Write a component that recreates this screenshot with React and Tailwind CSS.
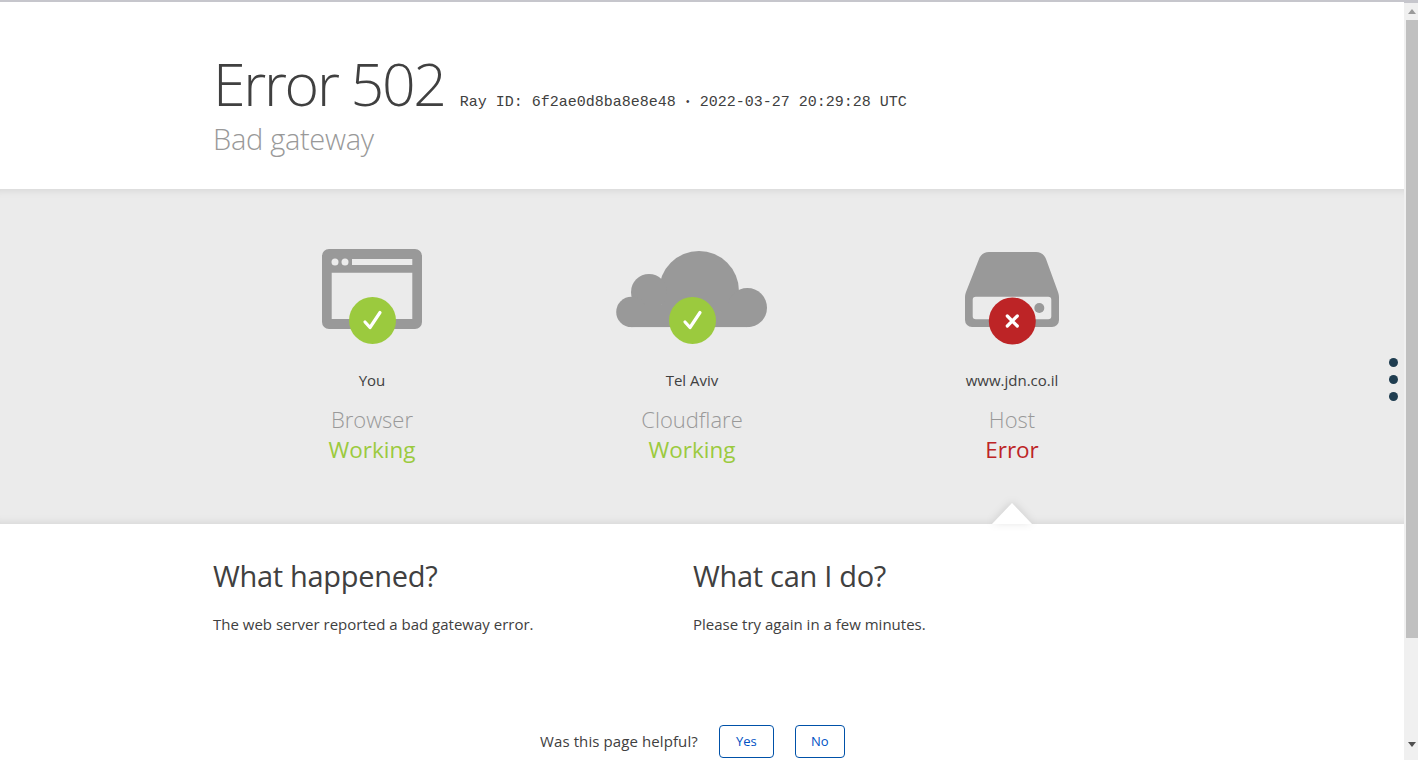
const SANS = "font-['Open_Sans',sans-serif]";

// ─── Status icons ─────────────────────────────────────────────────────────────
function Badge({ cx, cy, error }) {
  return (
    <g>
      <circle cx={cx} cy={cy} r="23.5" fill={error ? "#bd2426" : "#9bca3e"} />
      {error ? (
        <path
          d={`M${cx - 5} ${cy - 5}L${cx + 5} ${cy + 5}M${cx + 5} ${cy - 5}L${cx - 5} ${cy + 5}`}
          stroke="#fff"
          strokeWidth="3.2"
          strokeLinecap="round"
        />
      ) : (
        <path
          d={`M${cx - 7.5} ${cy + 1.5}L${cx - 2.5} ${cy + 7}L${cx + 7.5} ${cy - 8}`}
          stroke="#fff"
          strokeWidth="3.2"
          strokeLinecap="round"
          strokeLinejoin="round"
          fill="none"
        />
      )}
    </g>
  );
}

function BrowserIcon() {
  return (
    <svg width="160" height="100" viewBox="0 0 160 100">
      <path
        fillRule="evenodd"
        fill="#999"
        d="M37 4h86a7 7 0 0 1 7 7v66a7 7 0 0 1-7 7H37a7 7 0 0 1-7-7V11a7 7 0 0 1 7-7zM39.7 27.7V74h80.6V27.7z"
      />
      <rect x="60" y="14" width="60.3" height="6" fill="#ebebeb" />
      <circle cx="43" cy="17" r="3.5" fill="#ebebeb" />
      <circle cx="53" cy="17" r="3.5" fill="#ebebeb" />
      <Badge cx={80.5} cy={75.5} />
    </svg>
  );
}

function CloudIcon() {
  return (
    <svg width="160" height="100" viewBox="0 0 160 100">
      <g fill="#999">
        <circle cx="87" cy="46" r="40" />
        <circle cx="37" cy="47" r="18" />
        <circle cx="19.5" cy="67" r="15.3" />
        <circle cx="135.4" cy="62.7" r="19.6" />
        <rect x="19" y="60" width="116" height="22.3" />
      </g>
      <rect x="0" y="82.3" width="160" height="17.7" fill="#ebebeb" />
      <Badge cx={80.5} cy={75.5} />
    </svg>
  );
}

function ServerIcon() {
  return (
    <svg width="160" height="100" viewBox="0 0 160 100">
      <path
        fillRule="evenodd"
        fill="#999"
        d="M57 7H104c4.500 0 8.500 2.700 10 7L126 47c.7 2 1 3.500 1 5.500V75a7 7 0 0 1-7 7H40a7 7 0 0 1-7-7V52.500c0-2 .3-3.500 1-5.500L47 14c1.500-4.300 5.500-7 10-7zM43.700 51.700a3 3 0 0 0-3 3v16.600a3 3 0 0 0 3 3h72.600a3 3 0 0 0 3-3V54.700a3 3 0 0 0-3-3z"
      />
      <circle cx="107.300" cy="63" r="5" fill="#999" />
      <Badge cx={80.3} cy={76} error />
    </svg>
  );
}

// ─── Columns ──────────────────────────────────────────────────────────────────
const STATUS = [
  { Icon: BrowserIcon, place: "You", name: "Browser", state: "Working", color: "text-[#9bca3e]" },
  { Icon: CloudIcon, place: "Tel Aviv", name: "Cloudflare", state: "Working", color: "text-[#9bca3e]" },
  { Icon: ServerIcon, place: "www.jdn.co.il", name: "Host", state: "Error", color: "text-[#bd2426]" },
];

function StatusColumn({ Icon, place, name, state, color }) {
  return (
    <div className="w-[320px] flex flex-col items-center">
      <Icon />
      <p className="mt-[24px] text-[15px] leading-[22px] text-[#404040]">{place}</p>
      <p className="mt-[13px] text-[22px] leading-[30px] font-light text-[#999]">{name}</p>
      <p className={`mt-px text-[22.5px] leading-[30px] ${color}`}>{state}</p>
    </div>
  );
}

export default function App() {
  return (
    <div className={`h-[760px] overflow-hidden flex bg-white ${SANS}`}>
      <main className="relative flex-1 min-w-0">
        <div className="h-[2px] bg-[#c6c6cc]" />

        {/* Header */}
        <header className="h-[187px] pl-[213px] pt-[45px]">
          <div className="flex items-baseline">
            <h1 className="text-[59px] leading-[72px] font-light tracking-[-2.3px] text-[#404040]">Error 502</h1>
            <span className="ml-[15px] font-['Liberation_Mono',monospace] text-[15px] text-[#404040] whitespace-pre">
              Ray ID: 6f2ae0d8ba8e8e48 <span className="text-[10px] align-[1px]">•</span> 2022-03-27 20:29:28 UTC
            </span>
          </div>
          <h2 className="mt-[2px] text-[29px] leading-[36px] font-light tracking-[-0.3px] text-[#999]">Bad gateway</h2>
        </header>

        {/* Status */}
        <section className="relative h-[335px] bg-[#ebebeb] pl-[212px] pt-[56px] shadow-[inset_0_9px_8px_-8px_rgba(0,0,0,0.1),inset_0_-9px_8px_-8px_rgba(0,0,0,0.1)]">
          <div className="flex">
            {STATUS.map((s) => (
              <StatusColumn key={s.name} {...s} />
            ))}
          </div>
          <div className="absolute left-[992px] bottom-0 [filter:drop-shadow(0_-1px_4px_rgba(0,0,0,0.12))]">
            <div className="w-[40px] h-[21px] bg-white [clip-path:polygon(50%_0,100%_100%,0_100%)]" />
          </div>
          <div className="absolute left-[1389px] top-[169px] flex flex-col gap-[8px]">
            <span className="w-[9px] h-[9px] rounded-full bg-[#1f3d50]" />
            <span className="w-[9px] h-[9px] rounded-full bg-[#1f3d50]" />
            <span className="w-[9px] h-[9px] rounded-full bg-[#1f3d50]" />
          </div>
        </section>

        {/* What happened */}
        <section className="flex pl-[213px] pt-[31px]">
          <div className="w-[480px]">
            <h2 className="text-[29px] leading-[42px] tracking-[-0.3px] text-[#404040]">What happened?</h2>
            <p className="mt-[16px] text-[15px] leading-[22px] text-[#404040]">The web server reported a bad gateway error.</p>
          </div>
          <div className="w-[480px]">
            <h2 className="text-[29px] leading-[42px] tracking-[-0.3px] text-[#404040]">What can I do?</h2>
            <p className="mt-[16px] text-[15px] leading-[22px] text-[#404040]">Please try again in a few minutes.</p>
          </div>
        </section>

        {/* Feedback */}
        <div className="flex items-center pl-[540px] mt-[90px]">
          <span className="text-[15px] tracking-[0.1px] text-[#404040]">Was this page helpful?</span>
          <button className="ml-[21px] w-[55px] h-[33px] rounded-[4px] border border-[#0051a8] text-[13px] text-[#0051c3] bg-white">Yes</button>
          <button className="ml-[21px] w-[50px] h-[33px] rounded-[4px] border border-[#0051a8] text-[13px] text-[#0051c3] bg-white">No</button>
        </div>
      </main>

      {/* Scrollbar */}
      <aside className="w-[14px] shrink-0 bg-[#f0f0f0] flex flex-col items-end">
        <div className="w-full h-[3px] bg-[#c6c6cc]" />
        <div className="w-[12px] h-[17px] flex items-center justify-center">
          <svg width="8" height="5" viewBox="0 0 8 5"><path d="M4 0l4 5H0z" fill="#9a9a9a" /></svg>
        </div>
        <div className="w-[12px] h-[618px] bg-[#c0c0c0]" />
        <div className="w-[12px] mt-[104px] flex justify-center">
          <svg width="8" height="5" viewBox="0 0 8 5"><path d="M0 0h8L4 5z" fill="#505050" /></svg>
        </div>
      </aside>
    </div>
  );
}
